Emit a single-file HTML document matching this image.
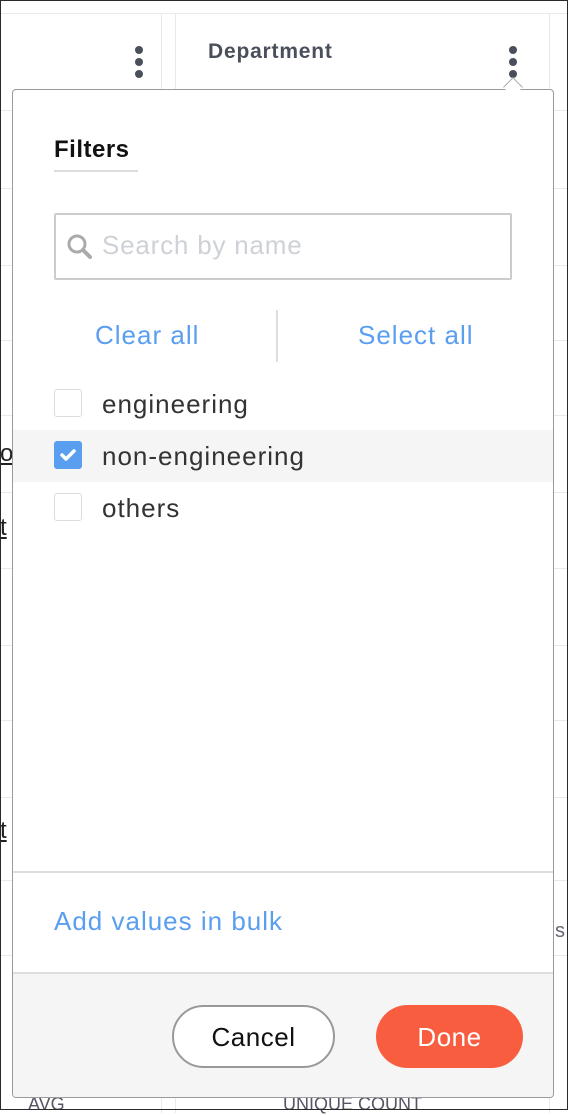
<!DOCTYPE html>
<html><head><style>
*{margin:0;padding:0;box-sizing:border-box}
body{width:568px;height:1110px;position:relative;overflow:hidden;background:#fff;font-family:"Liberation Sans",sans-serif;}
.frame{position:absolute;left:0;top:0;width:568px;height:1110px;border:1px solid #2a2a2a;pointer-events:none;z-index:9}
.hl{position:absolute;left:0;width:568px;height:1px;background:#e6e9ee}
.vl{position:absolute;top:13px;width:1px;height:1100px;background:#e6e9ee}
.dots{position:absolute;width:9px}
.dots i{display:block;width:8px;height:8px;border-radius:50%;background:#4a4f5c;margin-bottom:4px}
.pop{position:absolute;left:12px;top:89px;width:542px;height:1009px;border:1px solid #9a9a9a;border-radius:4px;background:#fff;overflow:hidden;z-index:5}
.blue{color:#5a9ef0;letter-spacing:1px;font-size:26px}
.cb{position:absolute;left:41px;width:28px;height:28px;border:1px solid #dcdcdc;border-radius:3px;background:#fff}
.lbl{position:absolute;left:89px;font-size:26px;color:#333;letter-spacing:1px}
</style></head><body>
<div class="hl" style="top:13px"></div>
<div class="hl" style="top:110px"></div>
<div class="hl" style="top:188px"></div>
<div class="hl" style="top:265px"></div>
<div class="hl" style="top:340px"></div>
<div class="hl" style="top:415px"></div>
<div class="hl" style="top:492px"></div>
<div class="hl" style="top:568px"></div>
<div class="hl" style="top:645px"></div>
<div class="hl" style="top:720px"></div>
<div class="hl" style="top:797px"></div>
<div class="hl" style="top:880px"></div>
<div class="hl" style="top:955px"></div>
<div class="vl" style="left:161px"></div>
<div class="vl" style="left:175px"></div>
<div class="vl" style="left:549px"></div>
<div class="dots" style="left:135px;top:46px"><i></i><i></i><i></i></div>
<div class="dots" style="left:509px;top:46px"><i></i><i></i><i></i></div>
<div style="position:absolute;left:208px;top:40px;font-size:21px;font-weight:bold;color:#4a4f5c;letter-spacing:0.8px">Department</div>
<div style="position:absolute;left:0;top:440px;font-size:24px;color:#222;text-decoration:underline">o</div>
<div style="position:absolute;left:0;top:514px;font-size:24px;color:#222;text-decoration:underline">t</div>
<div style="position:absolute;left:0;top:817px;font-size:24px;color:#222;text-decoration:underline">t</div>
<div style="position:absolute;left:555px;top:920px;font-size:20px;color:#667">s</div>
<div style="position:absolute;left:506px;top:80px;width:14px;height:14px;background:#fff;border-left:1px solid #aaa;border-top:1px solid #aaa;transform:rotate(45deg);z-index:6"></div>
<div class="pop">
 <div style="position:absolute;left:41px;top:46px;font-size:24px;font-weight:bold;color:#111;letter-spacing:0.5px">Filters</div>
 <div style="position:absolute;left:41px;top:80px;width:84px;height:2px;background:#ddd"></div>
 <div style="position:absolute;left:41px;top:123px;width:458px;height:67px;border:2px solid #ccc;border-radius:2px"></div>
 <svg style="position:absolute;left:53px;top:143px" width="28" height="28" viewBox="0 0 28 28"><circle cx="11" cy="11" r="8" fill="none" stroke="#aaa" stroke-width="3"/><line x1="17" y1="17" x2="24" y2="24" stroke="#aaa" stroke-width="4" stroke-linecap="round"/></svg>
 <div style="position:absolute;left:89px;top:140px;font-size:26px;color:#cfd1d8;letter-spacing:0.8px">Search by name</div>
 <div class="blue" style="position:absolute;left:82px;top:230px">Clear all</div>
 <div style="position:absolute;left:263px;top:220px;width:2px;height:52px;background:#ddd"></div>
 <div class="blue" style="position:absolute;left:345px;top:230px">Select all</div>
 <div class="cb" style="top:299px"></div>
 <div class="lbl" style="top:299px">engineering</div>
 <div style="position:absolute;left:0;top:340px;width:542px;height:52px;background:#f5f5f5"></div>
 <div class="cb" style="top:351px;background:#5a9ef0;border-color:#5a9ef0"><svg width="26" height="26" viewBox="0 0 26 26"><path d="M7 13 L11 17 L19 9" fill="none" stroke="#fff" stroke-width="3.5" stroke-linecap="round" stroke-linejoin="round"/></svg></div>
 <div class="lbl" style="top:351px">non-engineering</div>
 <div class="cb" style="top:403px"></div>
 <div class="lbl" style="top:403px">others</div>
 <div style="position:absolute;left:0;top:781px;width:542px;height:2px;background:#ddd"></div>
 <div class="blue" style="position:absolute;left:41px;top:816px">Add values in bulk</div>
 <div style="position:absolute;left:0;top:882px;width:542px;height:130px;background:#f5f5f5;border-top:2px solid #ddd"></div>
 <div style="position:absolute;left:159px;top:915px;width:163px;height:63px;border:2px solid #999;border-radius:32px;background:#fff;text-align:center;line-height:61px;font-size:26px;color:#111;letter-spacing:0.5px">Cancel</div>
 <div style="position:absolute;left:363px;top:915px;width:147px;height:63px;border-radius:32px;background:#f95d40;text-align:center;line-height:65px;font-size:26px;color:#fff;letter-spacing:0.5px">Done</div>
</div>
<div style="position:absolute;left:28px;top:1094px;font-size:18px;color:#556">AVG</div>
<div style="position:absolute;left:283px;top:1094px;font-size:18px;color:#556">UNIQUE COUNT</div>
<div class="frame"></div>
</body></html>
